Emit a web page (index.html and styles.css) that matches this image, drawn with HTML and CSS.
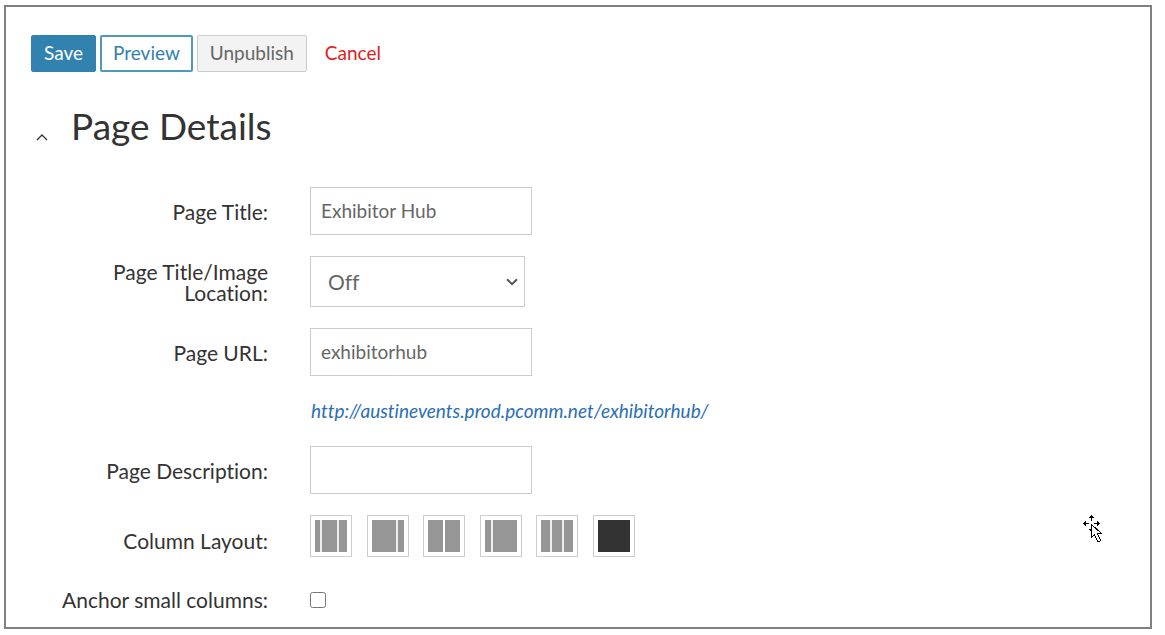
FILE: index.html
```html
<!DOCTYPE html>
<html lang="en">
<head>
<meta charset="utf-8">
<title>Page Details</title>
<link rel="stylesheet" href="styles.css">
</head>
<body>
<main class="panel">
  <div class="toolbar">
    <button class="btn btn-primary" type="submit" form="details">Save</button>
    <button class="btn btn-outline" type="button">Preview</button>
    <button class="btn btn-muted" type="button">Unpublish</button>
    <a class="cancel" href="#">Cancel</a>
  </div>
  <header class="section-head">
    <button class="collapse" type="button" aria-label="Collapse section">
      <svg width="12" height="8" viewBox="0 0 12 8"><path d="M1 7 6 2l5 5" fill="none" stroke="#333" stroke-width="1.3"/></svg>
    </button>
    <h1 class="section-title">Page Details</h1>
  </header>
  <form class="details" id="details">
    <label class="label" for="title">Page Title:</label>
    <input class="text-box" id="title" type="text" value="Exhibitor Hub">

    <label class="label label-wrap" for="location">Page Title/Image Location:</label>
    <div class="select-wrap">
      <select class="select" id="location"><option>Off</option><option>On</option></select>
      <svg class="select-arrow" width="12" height="8" viewBox="0 0 12 8"><path d="M1 1.200 6 6.200l5-5" fill="none" stroke="#555" stroke-width="2"/></svg>
    </div>

    <label class="label" for="url">Page URL:</label>
    <input class="text-box" id="url" type="text" value="exhibitorhub">

    <a class="page-link" href="#">http://austinevents.prod.pcomm.net/exhibitorhub/</a>

    <label class="label" for="description">Page Description:</label>
    <input class="text-box" id="description" type="text">

    <span class="label label-low" id="layout-label">Column Layout:</span>
    <div class="layouts" role="group" aria-labelledby="layout-label">
      <button class="layout" type="button" aria-label="Small, large, medium columns"><svg width="32" height="32" viewBox="0 0 32 32"><path fill="#eee" d="M0 0h32v32H0z"/><path d="M0 0h5v32H0zM7 0h15v32H7zM24 0h8v32h-8z"/></svg></button>
      <button class="layout" type="button" aria-label="Large column, small right column"><svg width="32" height="32" viewBox="0 0 32 32"><path fill="#eee" d="M0 0h32v32H0z"/><path d="M0 0h24v32H0zM26 0h6v32h-6z"/></svg></button>
      <button class="layout" type="button" aria-label="Two equal columns"><svg width="32" height="32" viewBox="0 0 32 32"><path d="M0 0h15v32H0zM17 0h15v32H17z"/></svg></button>
      <button class="layout" type="button" aria-label="Small left column, large column"><svg width="32" height="32" viewBox="0 0 32 32"><path fill="#eee" d="M0 0h32v32H0z"/><path d="M0 0h6v32H0zM8 0h24v32H8z"/></svg></button>
      <button class="layout" type="button" aria-label="Three equal columns"><svg width="32" height="32" viewBox="0 0 32 32"><path fill="#eee" d="M0 0h32v32H0z"/><path d="M0 0h9v32H0zM11 0h10v32H11zM23 0h9v32h-9z"/></svg></button>
      <button class="layout layout-active" type="button" aria-pressed="true" aria-label="Single column"><svg width="32" height="32" viewBox="0 0 32 32"><path d="M0 0h32v32H0z"/></svg></button>
    </div>

    <label class="label label-tall" for="anchor">Anchor small columns:</label>
    <input class="check" id="anchor" type="checkbox">
  </form>
  <svg class="pointer" width="20" height="29" viewBox="0 0 20 29" shape-rendering="crispEdges" aria-hidden="true">
    <path d="M8 0h1v1h1v1h1v1H9v3H8V3H6V2h1V1h1zM0 8h1V7h1V6h1v2h3v1H3v2H2v-1H1V9H0zM17 8h-1V7h-1V6h-1v2h-3v1h3v2h1v-1h1V9h1zM6 14h2v2H7v-1H6z"/>
    <path d="M8.500 9.500v13l3-3 3 7h2l1-1-3-7h4z" fill="#fff" stroke="#000" stroke-width="1"/>
  </svg>
</main>
</body>
</html>
```
FILE: styles.css
```css
* {
  box-sizing: border-box;
}

body {
  margin: 5px 13px 6px 4px;
  background: #fff;
  color: #333;
  font-family: Lato, "Liberation Sans", sans-serif;
  font-size: 21px;
  font-variant-ligatures: none;
}

button,
input,
select {
  font-family: inherit;
  font-variant-ligatures: inherit;
}

.panel {
  position: relative;
  padding: 28px 25px 5px;
  border: 2px solid #808080;
}

.toolbar {
  display: flex;
  align-items: center;
  gap: 4px;
}

.btn {
  height: 37px;
  padding: 0 12px 2px;
  border: 1px solid;
  border-radius: 2px;
  font-size: 19px;
}

.btn-primary {
  border-color: #3182ae;
  background: #3182ae;
  color: #fff;
}

.btn-outline {
  border: 2px solid #4c9bbd;
  padding: 0 11px 2px;
  background: #fff;
  color: #3182ae;
}

.btn-muted {
  border-color: #ccc;
  background: #f3f3f3;
  color: #666;
}

.cancel {
  padding: 0 14px 2px;
  color: #e01b22;
  font-size: 19px;
  text-decoration: none;
}

.section-head {
  display: flex;
  align-items: center;
  gap: 23px;
  margin: 30px 0 37px 5px;
}

.collapse {
  display: flex;
  padding: 22px 0 0;
  border: 0;
  background: none;
}

.section-title {
  margin: 0;
  font-size: 37px;
  font-weight: 400;
  line-height: 48px;
}

.details {
  display: grid;
  grid-template-columns: 237px minmax(0, 1fr);
  column-gap: 42px;
  row-gap: 21px;
  align-items: center;
  justify-items: start;
}

.label {
  justify-self: end;
  line-height: 21px;
  text-align: right;
}

.label-wrap {
  max-width: 180px;
}

.label-low {
  padding-top: 8px;
}

.label-tall {
  line-height: 44px;
}

.text-box,
.select {
  border: 1px solid #ccc;
  border-radius: 0;
  background: #fff;
  color: #666;
}

.text-box {
  width: 222px;
  height: 48px;
  padding: 0 10px 2px;
  font-size: 19px;
}

.select-wrap {
  position: relative;
  width: 215px;
}

.select {
  display: block;
  width: 100%;
  height: 51px;
  padding: 0 17px;
  appearance: none;
  font-size: 21px;
}

.select-arrow {
  position: absolute;
  top: 22px;
  right: 7px;
  pointer-events: none;
}

.page-link {
  grid-column: 2;
  padding-left: 1px;
  color: #2a6fb5;
  font-size: 19px;
  font-style: italic;
  line-height: 28px;
  text-decoration: none;
}

.layouts {
  display: flex;
  justify-content: space-between;
  width: 325px;
}

.layout {
  display: flex;
  padding: 4px;
  border: 1px solid #ccc;
  background: #fff;
  fill: #969696;
}

.layout-active {
  fill: #333;
}

.check {
  width: 16px;
  height: 16px;
  margin: 0;
}

.pointer {
  position: absolute;
  top: 508px;
  right: 47px;
}
```
